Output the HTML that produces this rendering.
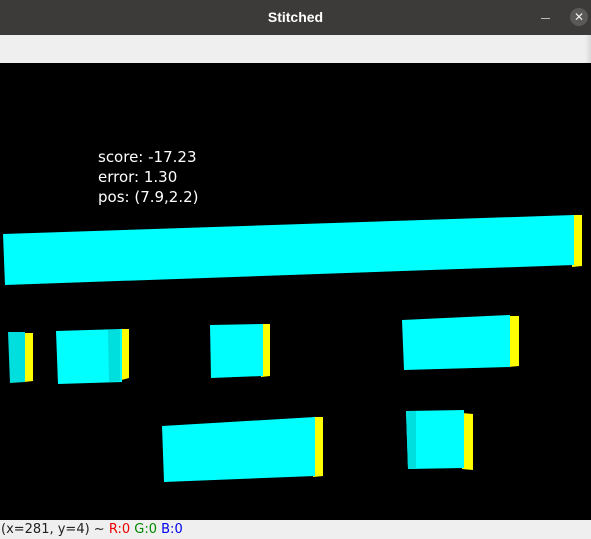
<!DOCTYPE html>
<html><head><style>
body{margin:0;width:591px;height:539px;overflow:hidden;font-family:"Liberation Sans","DejaVu Sans",sans-serif;background:#000}
.title{position:absolute;left:0;top:0;width:591px;height:35px;background:#3c3b39;color:#fff;font-weight:bold;font-size:14px;text-align:center;line-height:34px}
.tool{position:absolute;left:0;top:35px;width:591px;height:28px;background:#efefef}
.status{position:absolute;left:0;top:520px;width:591px;height:19px;background:#efefef;font-size:13px;line-height:19px;color:#222;padding-left:1px;font-family:"DejaVu Sans",sans-serif}
svg{position:absolute;left:0;top:63px}
.t{position:absolute;left:98px;color:#fff;font-size:15px;font-family:"DejaVu Sans",sans-serif}
</style></head><body>
<div class="title">Stitched</div>
<div style="position:absolute;left:541px;top:18px;width:9px;height:1px;background:#bbb"></div>
<div style="position:absolute;left:570px;top:8px;width:18px;height:18px;border-radius:50%;background:#5a5957;color:#eee;font-size:12px;text-align:center;line-height:18px">✕</div>
<div class="tool"></div>
<div style="position:absolute;left:585px;top:35px;width:6px;height:28px;background:linear-gradient(90deg,#efefef,#d8d8d8)"></div>
<svg width="591" height="457" viewBox="0 63 591 457">
<g fill="#ffff00">
<polygon points="572,215 582,215 582,266 572,267"/>
<polygon points="24,333 33,333 33,381 24,382"/>
<polygon points="118,329 129,329 129,378 118,381"/>
<polygon points="261,324 270,324 270,376 261,377"/>
<polygon points="508,316 519,316 519,366 508,367"/>
<polygon points="313,417 323,417 323,476 313,477"/>
<polygon points="462,413 473,414 473,470 462,469"/>
</g>
<g fill="#00ffff">
<polygon points="3,234 574,215 574,265 5,285"/>
<polygon points="56,331 122,329 122,382 58,384"/>
<polygon points="210,325 263,324 263,376 211,378"/>
<polygon points="402,320 510,315 510,367 404,370"/>
<polygon points="162,426 315,417 315,476 164,482"/>
<polygon points="406,411 464,410 464,468 408,469"/>
</g>
<g fill="#00dede">
<polygon points="8,332 25,332 25,382 10,383"/>
<polygon points="108,330 120,329 120,381 109,382"/>
<polygon points="406,411 416,411 416,469 408,469"/>
</g>
</svg>
<div class="t" style="top:148px">score: -17.23</div>
<div class="t" style="top:168px">error: 1.30</div>
<div class="t" style="top:188px">pos: (7.9,2.2)</div>
<div class="status">(x=281, y=4) ~ <span style="color:#e00">R:0</span> <span style="color:#080">G:0</span> <span style="color:#00e">B:0</span></div>
</body></html>
